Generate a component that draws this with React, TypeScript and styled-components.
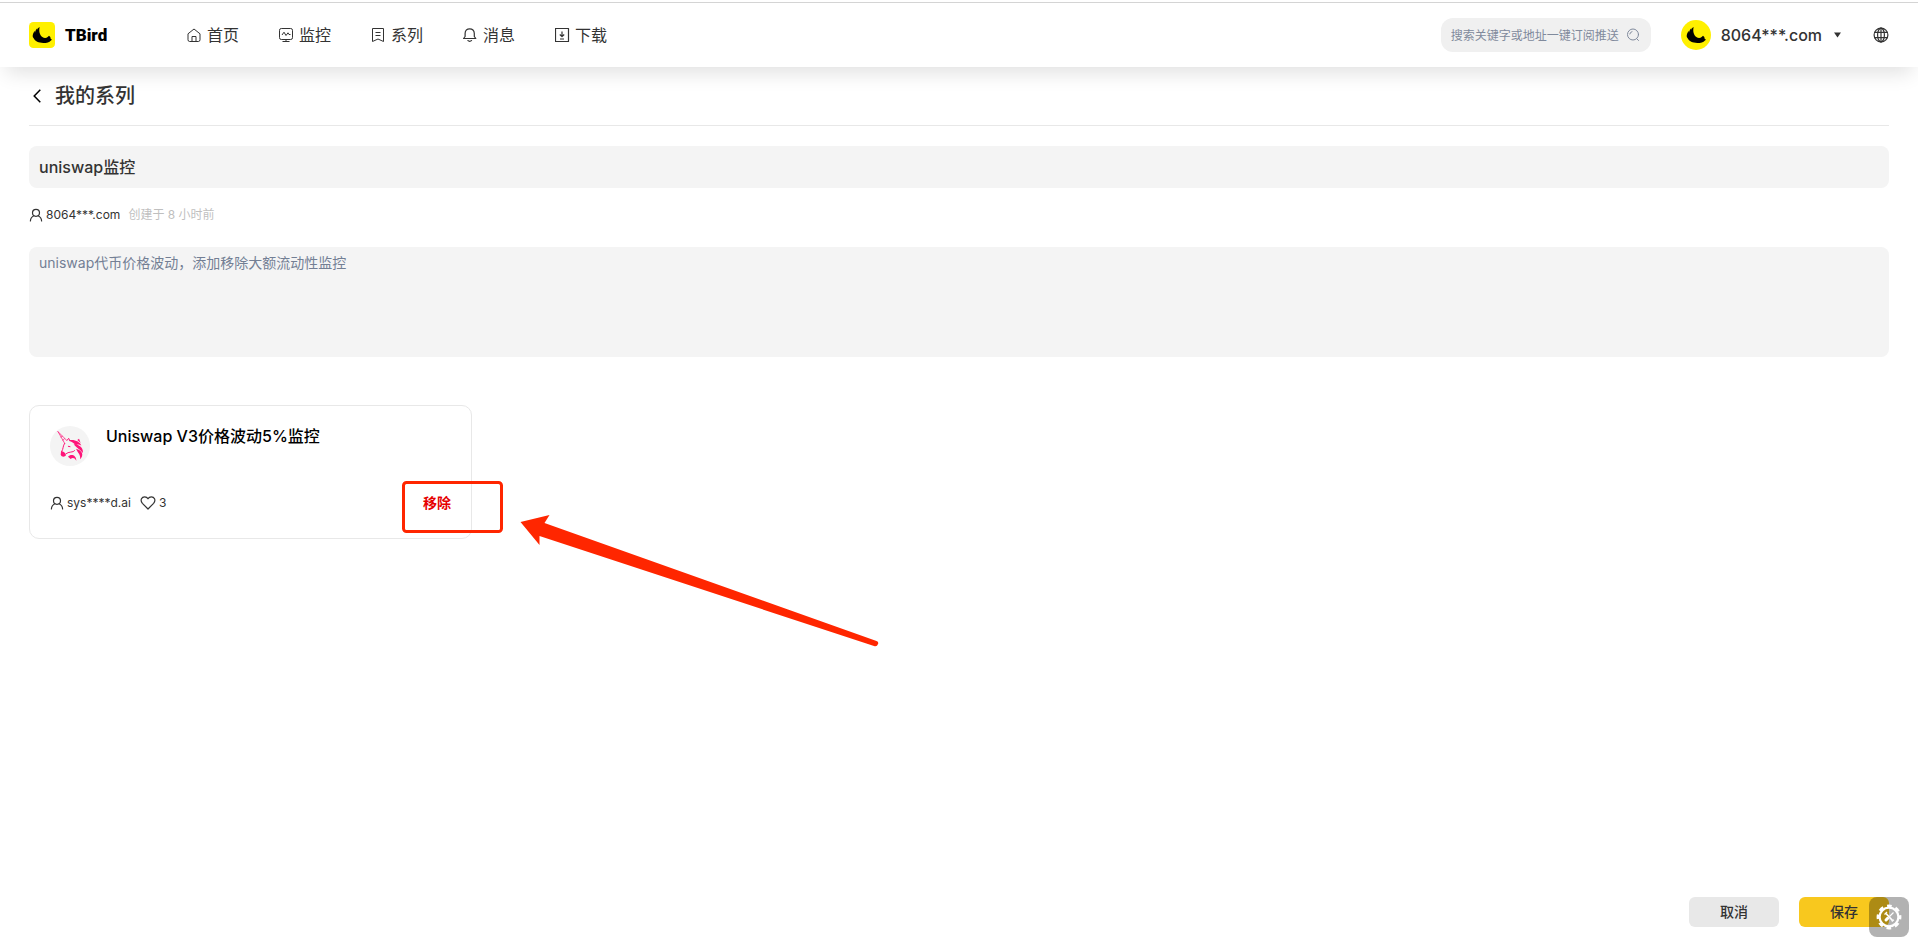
import React, { useState } from "react";
import styled, { createGlobalStyle } from "styled-components";

const GlobalStyle = createGlobalStyle`
  *, *::before, *::after { box-sizing: border-box; }
  body {
    margin: 0;
    background: #fff;
    color: #333;
    font-family: Inter, "Noto Sans CJK SC", sans-serif;
    font-size: 14px;
  }
  button, input, textarea { font: inherit; color: inherit; }
  button { border: 0; padding: 0; background: none; cursor: pointer; }
  svg { display: block; flex: none; }
`;

const Page = styled.div`
  min-height: 100vh;
  display: flex;
  flex-direction: column;
  padding-top: 2px;
`;

const Header = styled.header`
  display: flex;
  align-items: center;
  height: 65px;
  padding: 0 29px;
  border-top: 1px solid #d4d4d4;
  box-shadow: 0 12px 20px -6px rgba(0, 0, 0, 0.12);
`;

const Brand = styled.a`
  display: flex;
  align-items: center;
  gap: 10px;
  width: 158px;
  color: #000;
  font-family: Roboto, sans-serif;
  font-size: 17px;
  font-weight: 900;
  text-decoration: none;
`;

const Nav = styled.nav`
  display: flex;
  gap: 40px;
`;

const NavLink = styled.a`
  display: flex;
  align-items: center;
  gap: 4px;
  color: #333;
  font-size: 16px;
  line-height: 24px;
  text-decoration: none;
`;

const HeaderTools = styled.div`
  display: flex;
  align-items: center;
  margin-left: auto;
`;

const Search = styled.label`
  display: flex;
  align-items: center;
  justify-content: space-between;
  width: 210px;
  height: 34px;
  padding: 0 10px;
  border-radius: 12px;
  background: #f0f0f0;
  color: #808a9c;
`;

const SearchInput = styled.input`
  width: 172px;
  padding: 0;
  border: 0;
  outline: 0;
  background: none;
  font-size: 12px;
  &::placeholder { color: #808a9c; opacity: 1; }
`;

const Account = styled.button`
  display: flex;
  align-items: center;
  gap: 10px;
  margin: 0 32px 0 30px;
  font-size: 16px;
  font-weight: 500;
`;

const Caret = styled.span`
  display: flex;
  padding-left: 2px;
`;

const Main = styled.main`
  flex: 1;
  padding: 0 29px;
`;

const TitleBar = styled.div`
  display: flex;
  align-items: center;
  gap: 14px;
  height: 59px;
  padding-left: 4px;
  border-bottom: 1px solid #e8e8e8;
  margin-bottom: 20px;
`;

const Title = styled.h1`
  margin: 0;
  font-size: 20px;
  font-weight: 500;
  line-height: 28px;
`;

const NameInput = styled.input`
  display: block;
  width: 100%;
  height: 42px;
  padding: 0 10px 2px;
  border: 0;
  border-radius: 8px;
  outline: 0;
  background: #f4f4f4;
  font-size: 16px;
  font-weight: 500;
`;

const Meta = styled.div`
  display: flex;
  align-items: center;
  font-size: 12px;
  line-height: 18px;
`;

const AuthorLine = styled(Meta)`
  padding: 18px 0 23px;
  gap: 8px;
`;

const Person = styled.span`
  display: flex;
  align-items: center;
  gap: 3px;
`;

const Created = styled.span`
  color: #bfbfbf;
`;

const Description = styled.textarea`
  display: block;
  width: 100%;
  height: 110px;
  padding: 6px 10px;
  border: 0;
  border-radius: 8px;
  outline: 0;
  resize: none;
  background: #f4f4f4;
  color: #737f94;
  line-height: 20px;
`;

const Card = styled.article`
  position: relative;
  display: flex;
  flex-direction: column;
  justify-content: space-between;
  width: 443px;
  height: 134px;
  margin-top: 48px;
  padding: 20px;
  border: 1px solid #e8e8e8;
  border-radius: 10px;
`;

const CardHead = styled.div`
  display: flex;
  gap: 16px;
`;

const CardTitle = styled.h2`
  margin: 0;
  color: #000;
  font-size: 16px;
  font-weight: 500;
  line-height: 20px;
`;

const CardFoot = styled.div`
  display: flex;
  align-items: center;
  justify-content: space-between;
  height: 30px;
`;

const CardMeta = styled(Meta)`
  gap: 9px;
`;

const RemoveButton = styled.button`
  color: #e60000;
  font-weight: 700;
  line-height: 20px;
`;

const Annotation = styled.svg`
  position: absolute;
  top: 74px;
  left: 370px;
  pointer-events: none;
`;

const Footer = styled.footer`
  display: flex;
  justify-content: flex-end;
  gap: 20px;
  padding: 0 29px 13px;
`;

const ActionButton = styled.button<{ $primary?: boolean }>`
  width: 90px;
  height: 30px;
  padding-bottom: 2px;
  border-radius: 6px;
  background: ${(p) => (p.$primary ? "#f8c81e" : "#e8e8e8")};
  font-weight: 500;
`;

const ToolsButton = styled.button`
  position: fixed;
  right: 9px;
  bottom: 3px;
  display: grid;
  place-items: center;
  width: 40px;
  height: 40px;
  border-radius: 8px;
  background: rgba(0, 0, 0, 0.3);
`;

const BirdMark = ({ size, round }: { size: number; round?: boolean }) => (
  <svg width={size} height={size} viewBox={round ? "-6 -6 90 90" : "0 0 78 78"} aria-hidden="true">
    {round ? <circle cx="39" cy="39" r="45" fill="#fff000" /> : <rect width="78" height="78" rx="13" fill="#fff000" />}
    <path d="M32 15C29 27 32 39 40 45C46 49 52 48 56 45L60 41L64 45L65 50L69 53L65 56C62 61 53 63 43 63C29 63 18 58 14 49C10 45 11 40 12 37C13 33 15 29 17 27L18 32C19 26 22 21 25 19L25 24C26 20 29 16 32 15Z" fill="#000" />
  </svg>
);

const Stroke = ({ children, size = 16, w = 1 }: { children: React.ReactNode; size?: number; w?: number }) => (
  <svg width={size} height={size} viewBox={`0 0 ${size} ${size}`} fill="none" stroke="currentColor" strokeWidth={w} strokeLinecap="round" strokeLinejoin="round" aria-hidden="true">
    {children}
  </svg>
);

const PersonIcon = () => (
  <Stroke size={14} w={1.2}>
    <circle cx="7" cy="4.8" r="3.5" />
    <path d="M1.4 13C1.6 10.2 3.2 8.5 5 7.8M12.6 13C12.4 10.2 10.8 8.5 9 7.8" />
  </Stroke>
);

const UnicornAvatar = () => (
  <svg width="40" height="40" viewBox="0 0 120 120" aria-hidden="true">
    <circle cx="60" cy="60" r="60" fill="#f4f4f4" />
    <g fill="none" stroke="#ff1479" strokeLinecap="round" strokeLinejoin="round">
      <path d="M24 17L44 52M24 17L51 44M33 33L37 31M39 43L43 38" strokeWidth="2.2" />
      <path d="M44 52C38 60 41 67 35 77M52 42L56 37L60 45M55 61L60 62" strokeWidth="3" />
      <path d="M47 84C56 75 70 81 74 74" strokeWidth="3" />
    </g>
    <g fill="#ff1479">
      <path d="M57 43C75 40 90 48 94 59C85 54 80 55 78 59C71 50 65 49 57 43Z" />
      <path d="M71 55C90 55 102 69 98 81C91 70 82 69 71 55Z" />
      <path d="M78 68C97 73 103 87 90 100C93 86 84 82 78 68Z" />
      <path d="M33 77C37 74 40 78 45 81L48 88C44 94 34 93 32 86Z" />
      <path d="M54 92C62 82 79 86 79 104C73 94 67 95 62 99Z" />
      <path d="M82 42L92 51L87 38Z" />
    </g>
  </svg>
);

const GearIcon = () => (
  <svg width="28" height="28" viewBox="0 0 28 28" fill="none" stroke="#fff" aria-hidden="true">
    <circle cx="14" cy="14" r="9.4" strokeWidth="2.2" />
    <circle cx="14" cy="14" r="11.2" strokeWidth="2.4" strokeDasharray="4.7 4.1" strokeDashoffset="2.3" />
    <path d="M11 10.5L17.5 17.5" strokeWidth="1.8" />
    <path d="M18.5 9.5L14.5 13.5" strokeWidth="1.1" />
    <path d="M12.6 15.4L11 17" strokeWidth="3" strokeLinecap="round" />
    <path d="M9.5 11.5L12 9M16.8 18.5L18.8 16.8" strokeWidth="1.3" />
  </svg>
);

const navItems = [
  {
    label: "首页",
    icon: <path d="M1 5.8L7 1L13 5.8V11.8Q13 13.5 11.3 13.5H2.7Q1 13.5 1 11.8ZM5 13.5V8.5H9V13.5" />,
  },
  {
    label: "监控",
    icon: (
      <>
        <rect x="0.5" y="0.5" width="13" height="11" rx="1.8" />
        <path d="M3 7L5 4.2L7 7.5L9 4.8L10 6.5H11.5M7 11.5V13.5M3.5 13.5H10.5" />
      </>
    ),
  },
  {
    label: "系列",
    icon: <path d="M1.5 0.5H12.5V13.5L7 11L1.5 13.5ZM4.5 4.5H9.5M4.5 7.5H9.5" />,
  },
  {
    label: "消息",
    icon: <path d="M0.6 10.5H12.8L11.3 8.5V5.5C11.3 2.5 9.3 0.8 6.7 0.8S2.1 2.5 2.1 5.5V8.5ZM4.7 12C5 13.7 8.4 13.7 8.7 12" strokeWidth="1.2" />,
  },
  {
    label: "下载",
    icon: <path d="M0.5 0.5H13.5V13.5H0.5ZM7 3.5V8.5M4.8 6.5L7 8.7L9.2 6.5M5 11H9" strokeWidth="1.2" />,
  },
];

export default function App() {
  const [name, setName] = useState("uniswap监控");
  const [description, setDescription] = useState("uniswap代币价格波动，添加移除大额流动性监控");

  return (
    <Page>
      <GlobalStyle />
      <Header>
        <Brand href="#">
          <BirdMark size={26} />
          TBird
        </Brand>
        <Nav>
          {navItems.map((item) => (
            <NavLink href="#" key={item.label}>
              <svg width="16" height="16" viewBox="0 -1 16 16" fill="none" stroke="currentColor" strokeLinejoin="round" aria-hidden="true">
                {item.icon}
              </svg>
              {item.label}
            </NavLink>
          ))}
        </Nav>
        <HeaderTools>
          <Search>
            <SearchInput aria-label="搜索" placeholder="搜索关键字或地址一键订阅推送" />
            <Stroke>
              <circle cx="8" cy="7.5" r="5.5" />
              <path d="M12 12L13.5 13.5M4.8 7A3 3 0 0 1 7 4.6" />
            </Stroke>
          </Search>
          <Account type="button">
            <BirdMark size={30} round />
            8064***.com
            <Caret>
              <svg width="7" height="6" viewBox="0 0 7 6" aria-hidden="true">
                <path d="M0 0.5H7L3.5 5.5Z" fill="#333" />
              </svg>
            </Caret>
          </Account>
          <button type="button" aria-label="语言">
            <Stroke w={1.2}>
              <circle cx="8" cy="8" r="6.9" />
              <ellipse cx="8" cy="8" rx="3.4" ry="6.9" />
              <path d="M8 1V15M1.8 5.4H14.2M1.8 10.6H14.2" />
            </Stroke>
          </button>
        </HeaderTools>
      </Header>

      <Main>
        <TitleBar>
          <button type="button" aria-label="返回">
            <svg width="8" height="14" viewBox="0 0 8 14" fill="none" stroke="#000" strokeWidth="1.5" aria-hidden="true">
              <path d="M7.3 0.8L1.2 7L7.3 13.2" />
            </svg>
          </button>
          <Title>我的系列</Title>
        </TitleBar>

        <NameInput aria-label="系列名称" value={name} onChange={(e) => setName(e.target.value)} />
        <AuthorLine>
          <Person>
            <PersonIcon />
            8064***.com
          </Person>
          <Created>创建于 8 小时前</Created>
        </AuthorLine>
        <Description aria-label="系列描述" value={description} onChange={(e) => setDescription(e.target.value)} />

        <Card>
          <CardHead>
            <UnicornAvatar />
            <CardTitle>Uniswap V3价格波动5%监控</CardTitle>
          </CardHead>
          <CardFoot>
            <CardMeta>
              <Person>
                <PersonIcon />
                sys****d.ai
              </Person>
              <Person>
                <Stroke w={1.2}>
                  <path d="M8 14L2.4 8.3C-0.4 5 2 1.8 4.6 1.8C6.2 1.8 7.4 2.6 8 3.8C8.6 2.6 9.8 1.8 11.4 1.8C14 1.8 16.4 5 13.6 8.3Z" />
                </Stroke>
                3
              </Person>
            </CardMeta>
            <RemoveButton type="button">移除</RemoveButton>
          </CardFoot>
          <Annotation width="480" height="170" viewBox="0 0 480 170" aria-hidden="true">
            <rect x="3.5" y="2.5" width="98" height="49" rx="3" fill="none" stroke="#ff2600" strokeWidth="3" />
            <path d="M120.500 42L149.500 35L144.500 43L476.500 161Q479 162 478 164Q477 167 474 166L139.500 56L139.500 65Z" fill="#ff2600" />
          </Annotation>
        </Card>
      </Main>

      <Footer>
        <ActionButton type="button">取消</ActionButton>
        <ActionButton type="button" $primary>
          保存
        </ActionButton>
      </Footer>
      <ToolsButton type="button" aria-label="工具">
        <GearIcon />
      </ToolsButton>
    </Page>
  );
}
